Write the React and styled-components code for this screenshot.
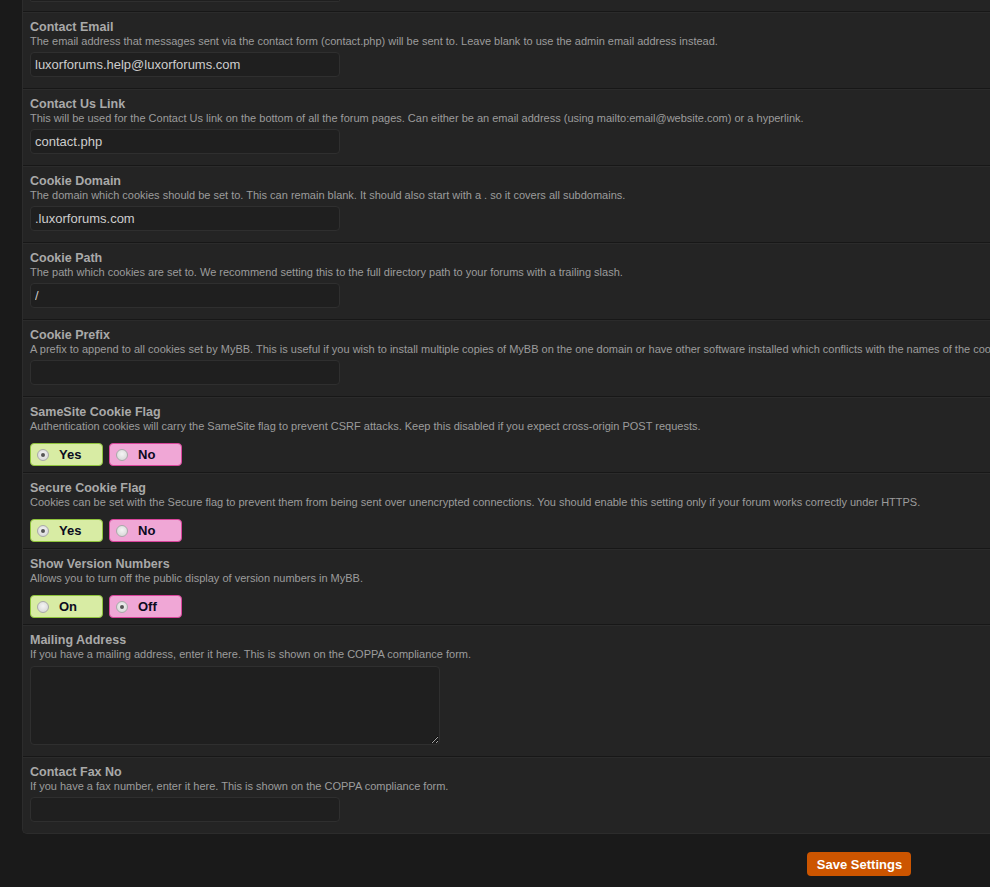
import React from "react";
import styled, { createGlobalStyle } from "styled-components";

const GlobalStyle = createGlobalStyle`
  html, body {
    margin: 0;
    padding: 0;
    background: #1a1a1a;
    overflow: hidden;
  }
  body {
    font-family: Tahoma, "Liberation Sans", Arial, sans-serif;
  }
`;

const settings = [
  {
    title: "Contact Email",
    desc: "The email address that messages sent via the contact form (contact.php) will be sent to. Leave blank to use the admin email address instead.",
    type: "text",
    value: "luxorforums.help@luxorforums.com",
  },
  {
    title: "Contact Us Link",
    desc: "This will be used for the Contact Us link on the bottom of all the forum pages. Can either be an email address (using mailto:email@website.com) or a hyperlink.",
    type: "text",
    value: "contact.php",
  },
  {
    title: "Cookie Domain",
    desc: "The domain which cookies should be set to. This can remain blank. It should also start with a . so it covers all subdomains.",
    type: "text",
    value: ".luxorforums.com",
  },
  {
    title: "Cookie Path",
    desc: "The path which cookies are set to. We recommend setting this to the full directory path to your forums with a trailing slash.",
    type: "text",
    value: "/",
  },
  {
    title: "Cookie Prefix",
    desc: "A prefix to append to all cookies set by MyBB. This is useful if you wish to install multiple copies of MyBB on the one domain or have other software installed which conflicts with the names of the cookies in MyBB.",
    type: "text",
    value: "",
  },
  {
    title: "SameSite Cookie Flag",
    desc: "Authentication cookies will carry the SameSite flag to prevent CSRF attacks. Keep this disabled if you expect cross-origin POST requests.",
    type: "yesno",
    labels: ["Yes", "No"],
    checked: 0,
  },
  {
    title: "Secure Cookie Flag",
    desc: "Cookies can be set with the Secure flag to prevent them from being sent over unencrypted connections. You should enable this setting only if your forum works correctly under HTTPS.",
    type: "yesno",
    labels: ["Yes", "No"],
    checked: 0,
  },
  {
    title: "Show Version Numbers",
    desc: "Allows you to turn off the public display of version numbers in MyBB.",
    type: "yesno",
    labels: ["On", "Off"],
    checked: 1,
  },
  {
    title: "Mailing Address",
    desc: "If you have a mailing address, enter it here. This is shown on the COPPA compliance form.",
    type: "textarea",
    value: "",
  },
  {
    title: "Contact Fax No",
    desc: "If you have a fax number, enter it here. This is shown on the COPPA compliance form.",
    type: "text",
    value: "",
  },
];

const Shell = styled.div`
  width: 1720px;
  padding-left: 22px;
  box-sizing: border-box;
`;

const Panel = styled.div`
  width: 1674px;
  background: #242424;
  border-left: 1px solid #2c2c2c;
  border-bottom: 1px solid #2c2c2c;
  border-radius: 0 0 0 5px;
  box-sizing: border-box;
`;

const Row = styled.div`
  padding: ${(p) => (p.$stub ? "0 7px 0" : "9px 7px 11px")};
  height: ${(p) => (p.$stub ? "12px" : "auto")};
  box-sizing: border-box;
  border-bottom: 1px solid #171717;
  box-shadow: inset 0 1px 0 #2b2b2b;
  ${(p) => p.$stub && "box-shadow: none;"}
  ${(p) => p.$last && "border-bottom: none;"}
  ${(p) => p.$radio && "padding-bottom: 6px;"}
`;

const Title = styled.div`
  font-size: 12.5px;
  font-weight: bold;
  line-height: 13px;
  color: #a9a9a9;
`;

const Desc = styled.div`
  font-size: 11px;
  line-height: 14px;
  color: #9c9c9c;
  white-space: nowrap;
`;

const TextInput = styled.input`
  display: block;
  margin-top: 4px;
  width: 310px;
  height: 25px;
  box-sizing: border-box;
  background: #1f1f1f;
  border: 1px solid #2f2f2f;
  border-radius: 4px;
  padding: 0 4px;
  color: #cdcdcd;
  font-family: Tahoma, "Liberation Sans", Arial, sans-serif;
  font-size: 13px;
  outline: none;
`;

const StubInput = styled.div`
  width: 310px;
  height: 2px;
  box-sizing: border-box;
  background: #1f1f1f;
  border: 1px solid #2f2f2f;
  border-top: none;
  border-radius: 0 0 4px 4px;
`;

const TextArea = styled.textarea`
  display: block;
  margin-top: 5px;
  width: 410px;
  height: 79px;
  box-sizing: border-box;
  background: #1f1f1f;
  border: 1px solid #2f2f2f;
  border-radius: 4px;
  color: #cdcdcd;
  font-family: Tahoma, "Liberation Sans", Arial, sans-serif;
  font-size: 13px;
  outline: none;
  resize: both;
`;

const RadioGroup = styled.div`
  display: flex;
  gap: 6px;
  margin-top: 10px;
`;

const Choice = styled.label`
  display: flex;
  align-items: center;
  width: 73px;
  height: 23px;
  box-sizing: border-box;
  padding-left: 6px;
  border-radius: 4px;
  border: 1px solid ${(p) => (p.$yes ? "#8fc43c" : "#d9449b")};
  background: ${(p) => (p.$yes ? "#d8eca4" : "#f0a7d6")};
  font-size: 13px;
  font-weight: bold;
  color: #0b0b1e;
`;

const Dot = styled.span`
  width: 12px;
  height: 12px;
  border-radius: 50%;
  box-sizing: border-box;
  border: 1px solid #a9a9a9;
  background: radial-gradient(circle at 50% 40%, #f4f4f4, #d2d2d2);
  margin-right: 10px;
  display: flex;
  align-items: center;
  justify-content: center;

  &::after {
    content: "";
    width: 4px;
    height: 4px;
    border-radius: 50%;
    background: ${(p) => (p.$on ? "#555" : "transparent")};
  }
`;

const Footer = styled.div`
  width: 1674px;
  display: flex;
  justify-content: center;
  padding-top: 18px;
`;

const SaveButton = styled.button`
  background: #cc5500;
  color: #fff;
  border: none;
  border-radius: 4px;
  height: 24px;
  padding: 0 9px 0 10px;
  font-family: Tahoma, "Liberation Sans", Arial, sans-serif;
  font-size: 13px;
  font-weight: bold;
`;

function Field({ s, last }) {
  return (
    <Row $last={last} $radio={s.type === "yesno"}>
      <Title>{s.title}</Title>
      <Desc>{s.desc}</Desc>
      {s.type === "text" && <TextInput defaultValue={s.value} />}
      {s.type === "textarea" && <TextArea defaultValue={s.value} />}
      {s.type === "yesno" && (
        <RadioGroup>
          {s.labels.map((l, i) => (
            <Choice key={l} $yes={i === 0}>
              <Dot $on={s.checked === i} />
              {l}
            </Choice>
          ))}
        </RadioGroup>
      )}
    </Row>
  );
}

export default function App() {
  return (
    <>
      <GlobalStyle />
      <Shell>
        <Panel>
          <Row $stub>
            <StubInput />
          </Row>
          {settings.map((s, i) => (
            <Field key={s.title} s={s} last={i === settings.length - 1} />
          ))}
        </Panel>
        <Footer>
          <SaveButton>Save Settings</SaveButton>
        </Footer>
      </Shell>
    </>
  );
}
